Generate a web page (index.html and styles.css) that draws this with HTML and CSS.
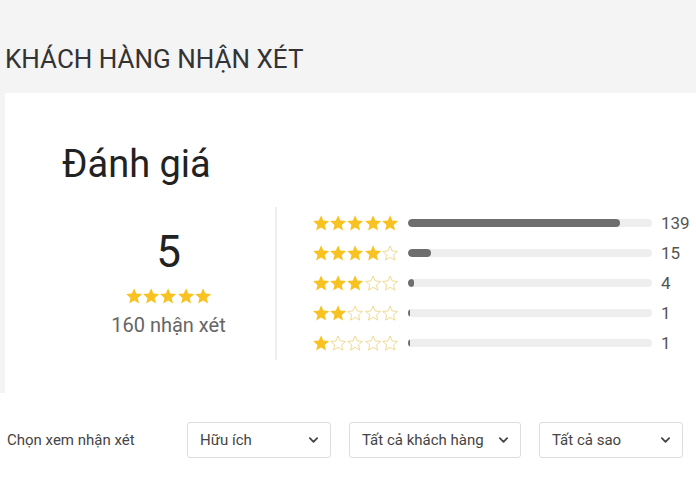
FILE: index.html
```html
<!DOCTYPE html>
<html lang="vi">
<head>
  <meta charset="UTF-8" />
  <meta name="viewport" content="width=device-width, initial-scale=1.0" />
  <title>Khách hàng nhận xét</title>
  <link rel="stylesheet" href="styles.css">
</head>
<body>

  <svg width="0" height="0" class="defs">
    <symbol id="star-full" viewBox="2 1.6 20 20">
      <path d="M12 17.27L18.18 21l-1.64-7.03L22 9.24l-7.19-.61L12 2 9.19 8.63 2 9.24l5.46 4.73L5.82 21z" fill="#f8c322"/>
    </symbol>
    <symbol id="star-empty" viewBox="2 1.6 20 20">
      <path d="M12 2.9l2.65 6.15 6.6.6-5 4.35 1.5 6.5L12 17l-5.75 3.5 1.5-6.5-5-4.35 6.6-.6z" fill="none" stroke="#eed88f" stroke-width="1.2" stroke-linejoin="round"/>
    </symbol>
    <symbol id="chevron" viewBox="0 0 10 6">
      <path d="M1 1l4 4 4-4" fill="none" stroke="#444" stroke-width="2" stroke-linecap="round" stroke-linejoin="round"/>
    </symbol>
  </svg>

  <div class="reviews">
    <h2 class="reviews-title">KHÁCH HÀNG NHẬN XÉT</h2>

    <div class="card">
      <h3 class="card-title">Đánh giá</h3>

      <div class="summary">
        <div class="average">
          <div class="average-score">5</div>
          <div class="stars stars-sm">
            <svg><use href="#star-full"/></svg><svg><use href="#star-full"/></svg><svg><use href="#star-full"/></svg><svg><use href="#star-full"/></svg><svg><use href="#star-full"/></svg>
          </div>
          <div class="average-count">160 nhận xét</div>
        </div>

        <div class="breakdown">
          <div class="row">
            <div class="stars">
              <svg><use href="#star-full"/></svg><svg><use href="#star-full"/></svg><svg><use href="#star-full"/></svg><svg><use href="#star-full"/></svg><svg><use href="#star-full"/></svg>
            </div>
            <div class="bar"><div class="bar-fill" style="width: 86.9%"></div></div>
            <span class="count">139</span>
          </div>
          <div class="row">
            <div class="stars">
              <svg><use href="#star-full"/></svg><svg><use href="#star-full"/></svg><svg><use href="#star-full"/></svg><svg><use href="#star-full"/></svg><svg><use href="#star-empty"/></svg>
            </div>
            <div class="bar"><div class="bar-fill" style="width: 9.4%"></div></div>
            <span class="count">15</span>
          </div>
          <div class="row">
            <div class="stars">
              <svg><use href="#star-full"/></svg><svg><use href="#star-full"/></svg><svg><use href="#star-full"/></svg><svg><use href="#star-empty"/></svg><svg><use href="#star-empty"/></svg>
            </div>
            <div class="bar"><div class="bar-fill" style="width: 2.5%"></div></div>
            <span class="count">4</span>
          </div>
          <div class="row">
            <div class="stars">
              <svg><use href="#star-full"/></svg><svg><use href="#star-full"/></svg><svg><use href="#star-empty"/></svg><svg><use href="#star-empty"/></svg><svg><use href="#star-empty"/></svg>
            </div>
            <div class="bar"><div class="bar-fill" style="width: 0.8%"></div></div>
            <span class="count">1</span>
          </div>
          <div class="row">
            <div class="stars">
              <svg><use href="#star-full"/></svg><svg><use href="#star-empty"/></svg><svg><use href="#star-empty"/></svg><svg><use href="#star-empty"/></svg><svg><use href="#star-empty"/></svg>
            </div>
            <div class="bar"><div class="bar-fill" style="width: 0.8%"></div></div>
            <span class="count">1</span>
          </div>
        </div>
      </div>
    </div>
  </div>

  <div class="filters">
    <span class="filters-label">Chọn xem nhận xét</span>
    <div class="select select-sort">
      <span>Hữu ích</span>
      <svg class="chevron"><use href="#chevron"/></svg>
    </div>
    <div class="select select-customer">
      <span>Tất cả khách hàng</span>
      <svg class="chevron"><use href="#chevron"/></svg>
    </div>
    <div class="select select-star">
      <span>Tất cả sao</span>
      <svg class="chevron"><use href="#chevron"/></svg>
    </div>
  </div>

</body>
</html>
```

FILE: styles.css
```css
body, html {
  margin: 0;
  padding: 0;
  background: #ffffff;
  font-family: Roboto, "Noto Sans", sans-serif;
  color: #333;
}

.defs {
  position: absolute;
}

.reviews {
  background: #f4f4f4;
  padding-left: 5px;
}

.reviews-title {
  margin: 0;
  padding: 44px 0 19px;
  font-size: 26px;
  line-height: 30px;
  font-weight: 400;
  color: #333;
}

.card {
  background: #fff;
  padding: 49px 0 33px;
}

.card-title {
  margin: 0 0 20px 57px;
  font-size: 38px;
  line-height: 45px;
  font-weight: 400;
  color: #222;
}

.summary {
  display: flex;
}

.average {
  width: 213px;
  margin-left: 57px;
  padding-top: 19px;
  display: flex;
  flex-direction: column;
  align-items: center;
  border-right: 2px solid #eeeeee;
  height: 134px;
}

.average-score {
  font-size: 44px;
  line-height: 52px;
  color: #222;
}

.stars {
  display: flex;
  gap: 1px;
}

.stars svg {
  width: 16.2px;
  height: 16px;
}

.stars-sm {
  margin-top: 10px;
}

.average-count {
  margin-top: 9px;
  font-size: 20px;
  line-height: 24px;
  color: #666;
}

.breakdown {
  padding: 1px 0 0 36px;
  flex: 1;
}

.row {
  display: flex;
  align-items: center;
  height: 30px;
}

.bar {
  width: 244px;
  height: 8px;
  margin-left: 10px;
  background: #eeeeee;
  border-radius: 4px;
  overflow: hidden;
}

.bar-fill {
  height: 100%;
  min-width: 2px;
  background: #6e6e6e;
  border-radius: 4px;
}

.count {
  margin-left: 9px;
  font-size: 17px;
  color: #555;
}

.filters {
  display: flex;
  align-items: center;
  padding: 29px 13px 0 7px;
}

.filters-label {
  width: 180px;
  font-size: 15px;
  color: #444;
}

.select {
  height: 34px;
  border: 1px solid #dddddd;
  border-radius: 3px;
  display: flex;
  align-items: center;
  justify-content: space-between;
  padding: 0 12px 0 12px;
  box-sizing: content-box;
  font-size: 15px;
  color: #444;
}

.select-sort {
  width: 118px;
}

.select-customer {
  width: 146px;
  margin-left: 18px;
}

.select-star {
  width: 118px;
  margin-left: 18px;
}

.chevron {
  width: 9px;
  height: 6px;
}
```
